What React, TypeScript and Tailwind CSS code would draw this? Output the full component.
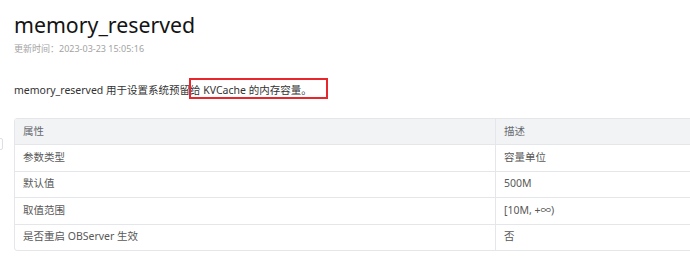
import React from "react";

const rows: [string, string][] = [
  ["参数类型", "容量单位"],
  ["默认值", "500M"],
  ["取值范围", "[10M, +∞)"],
  ["是否重启 OBServer 生效", "否"],
];

const font = {
  fontFamily: '"Noto Sans", "Noto Sans CJK SC", sans-serif',
};

export default function App() {
  return (
    <div className="relative w-[690px] h-[265px] overflow-hidden bg-white" style={font}>
      {/* collapsed side tab peeking from the left edge */}
      <div className="absolute left-[-6px] top-[138px] w-[9px] h-[12px] border border-[#dcdfe3] rounded-[2px] bg-white" />

      <div className="pl-[14px] pt-[9px]">
        <h1 className="text-[21.3px] leading-[32px] text-[#141414] font-normal">memory_reserved</h1>
        <div className="text-[9px] leading-[14px] text-[#a3a3a3] mt-[1px]">更新时间：2023-03-23 15:05:16</div>

        <p className="mt-[26px] text-[10.5px] leading-[16px] text-[#333333]">
          memory_reserved 用于设置系统预留
          <span className="relative">
            给 KVCache 的内存容量。
            <span className="absolute left-[-1px] top-[-5px] w-[139px] h-[21px] border-2 border-[#e8262b]" />
          </span>
        </p>

        <div className="mt-[20px] w-[720px] border border-[#e4e6ea] rounded-[3px] text-[10.5px] text-[#595959]">
          <div className="flex h-[26px] bg-[#f2f3f5] border-b border-[#e4e6ea]">
            <div className="w-[481px] flex items-center pl-[8px] border-r border-[#e4e6ea] text-[#666a70]">属性</div>
            <div className="flex-1 flex items-center pl-[8px] text-[#666a70]">描述</div>
          </div>
          {rows.map(([a, b], i) => (
            <div
              key={a}
              className={
                i < rows.length - 1
                  ? "flex h-[26.5px] border-b border-[#e4e6ea]"
                  : "flex h-[25.5px]"
              }
            >
              <div className="w-[481px] flex items-center pl-[8px] border-r border-[#e4e6ea]">{a}</div>
              <div className="flex-1 flex items-center pl-[8px]">{b}</div>
            </div>
          ))}
        </div>
      </div>
    </div>
  );
}
